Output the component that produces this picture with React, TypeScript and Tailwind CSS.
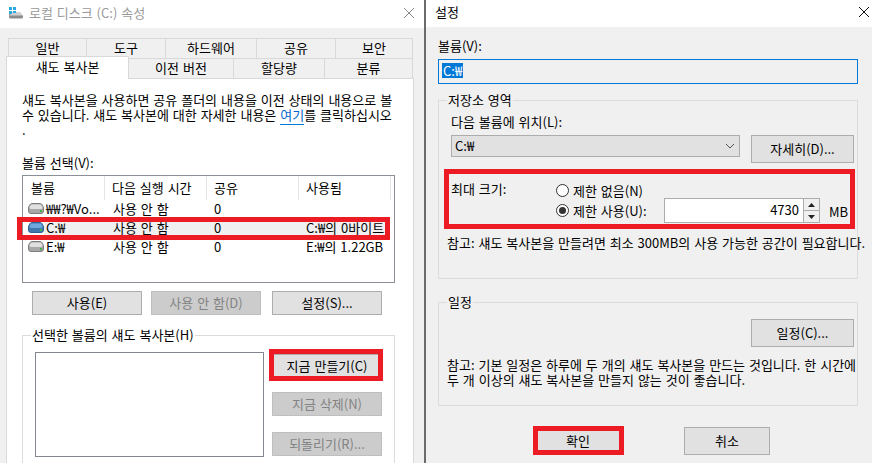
const font = { fontFamily: '"Noto Sans CJK KR", "Noto Sans", sans-serif' }

function DriveIcon({ blue }: { blue?: boolean }) {
  const top = blue ? '#6fa8dc' : '#e0e0e0'
  const side = blue ? '#3f78ad' : '#a8a8a8'
  const line = blue ? '#2f6596' : '#7d7d7d'
  return (
    <svg width="16" height="11" viewBox="0 0 16 11" className="shrink-0">
      <path d="M3.500.5h9c1 0 3 3 3 4.500v3a2.500 2.500 0 0 1-2.500 2.500H3A2.500 2.500 0 0 1 .5 8V5C.5 3.500 2.500.5 3.500.5z" fill={side} stroke={line} strokeWidth="1" />
      <path d="M4 1.500h8c1 0 2.500 2 2.500 3s-1 1.500-2 1.500h-9c-1 0-2-.5-2-1.500s1.500-3 2.500-3z" fill={top} />
      <rect x="12" y="7" width="2" height="2" fill="#3fb54a" />
    </svg>
  )
}

function TitleIcon() {
  return (
    <svg width="16" height="13" viewBox="0 0 16 13" className="shrink-0">
      <path d="M1 8h11l3 1.500V11a1.500 1.500 0 0 1-1.500 1.500h-11A1.500 1.500 0 0 1 1 11z" fill="#8c8c8c" />
      <path d="M5 6h7l3 3.500H1z" fill="#d0d0d0" />
      <rect x="1" y="1" width="3" height="3" fill="#2aa9e0" />
      <rect x="5" y="1" width="3" height="3" fill="#2aa9e0" />
      <rect x="1" y="5" width="3" height="3" fill="#2aa9e0" />
      <rect x="5" y="5" width="3" height="2" fill="#2aa9e0" />
    </svg>
  )
}

function CloseIcon({ color }: { color: string }) {
  return (
    <svg width="10" height="10" viewBox="0 0 10 10">
      <path d="M0 0l10 10M10 0L0 10" stroke={color} strokeWidth="1" fill="none" />
    </svg>
  )
}

function Btn({ label, disabled, w = 'w-[110px]', h = 'h-[24px]' }: { label: string; disabled?: boolean; w?: string; h?: string }) {
  return (
    <div
      className={`${w} ${h} shrink-0 flex items-center justify-center whitespace-nowrap pb-px border ${
        disabled ? 'bg-[#cccccc] border-[#bfbfbf] text-[#838383]' : 'bg-[#e1e1e1] border-[#adadad] text-black'
      }`}
    >
      {label}
    </div>
  )
}

function Highlight({ className }: { className: string }) {
  return <div className={`absolute border-[5px] border-[#ed1c24] pointer-events-none ${className}`}></div>
}

function Legend({ label }: { label: string }) {
  return <span className="absolute left-[8px] top-[-9px] bg-inherit px-[1px] leading-[15px] whitespace-nowrap">{label}</span>
}

function Radio({ checked }: { checked?: boolean }) {
  return (
    <span className="w-[13px] h-[13px] shrink-0 rounded-full border border-[#333333] bg-white flex items-center justify-center">
      {checked && <span className="w-[7px] h-[7px] rounded-full bg-[#333333]"></span>}
    </span>
  )
}

const tabsTop = [
  { label: '일반', w: 'w-[79px]' },
  { label: '도구', w: 'w-[80px]' },
  { label: '하드웨어', w: 'w-[92px]' },
  { label: '공유', w: 'w-[80px]' },
  { label: '보안', w: 'w-[78px]' },
]

const tabsBottom = [
  { label: '이전 버전', w: 'w-[106px]' },
  { label: '할당량', w: 'w-[92px]' },
  { label: '분류', w: 'w-[89px]' },
]

const volumes = [
  { name: '₩₩?₩Vo...', next: '사용 안 함', shares: '0', used: '' },
  { name: 'C:₩', next: '사용 안 함', shares: '0', used: 'C:₩의 0바이트', selected: true },
  { name: 'E:₩', next: '사용 안 함', shares: '0', used: 'E:₩의 1.22GB' },
]

function PropertiesWindow() {
  return (
    <div className="w-[426px] shrink-0 h-full flex flex-col bg-[#f0f0f0] border-r-2 border-[#6b6b6b]">
      <div className="h-[28px] shrink-0 bg-white flex items-center pl-[8px] pr-[10px] pb-[3px]">
        <TitleIcon />
        <span className="ml-[5px] text-[#9a9a9a]">로컬 디스크 (C:) 속성</span>
        <span className="ml-auto flex"><CloseIcon color="#8a8a8a" /></span>
      </div>

      <div className="pt-[10px] pl-[6px]">
        <div className="flex ml-[2px] h-[20px]">
          {tabsTop.map((t) => (
            <div key={t.label} className={`${t.w} flex items-center justify-center pb-px border border-b-0 border-[#d9d9d9] -mr-px`}>
              {t.label}
            </div>
          ))}
        </div>
        <div className="flex items-end h-[20px]">
          <div className="w-[123px] h-[23px] relative z-10 -mb-px bg-white border border-b-0 border-[#d9d9d9] flex items-center justify-center pb-[3px]">
            섀도 복사본
          </div>
          {tabsBottom.map((t) => (
            <div key={t.label} className={`${t.w} h-[20px] flex items-center justify-center pb-px border border-b-0 border-[#d9d9d9] -ml-px`}>
              {t.label}
            </div>
          ))}
        </div>

        <div className="w-[408px] h-[400px] bg-white border border-[#d9d9d9] pl-[15px] pt-[13px] overflow-hidden">
          <p className="leading-[15px] whitespace-nowrap">
            섀도 복사본을 사용하면 공유 폴더의 내용을 이전 상태의 내용으로 볼<br />
            수 있습니다. 섀도 복사본에 대한 자세한 내용은{' '}
            <span className="text-[#0066cc] border-b border-[#0078d7]">여기</span>를 클릭하십시오<br />
            .
          </p>
          <div className="mt-[18px] leading-[15px]">볼륨 선택(V):</div>

          <div className="mt-[5px] w-[373px] h-[108px] border border-[#8a8f99]">
            <div className="flex h-[24px] items-center">
              <div className="w-[82px] h-full pl-[8px] pb-px flex items-center border-r border-[#e5e5e5]">볼륨</div>
              <div className="w-[102px] h-full pl-[7px] pb-px flex items-center border-r border-[#e5e5e5]">다음 실행 시간</div>
              <div className="w-[92px] h-full pl-[7px] pb-px flex items-center border-r border-[#e5e5e5]">공유</div>
              <div className="w-[92px] h-full pl-[7px] pb-px flex items-center border-r border-[#e5e5e5]">사용됨</div>
            </div>
            {volumes.map((v) => (
              <div key={v.name} className="flex h-[19px] items-center">
                <div className="w-[21px] pl-[5px] pb-[2px] flex shrink-0"><DriveIcon blue={v.selected} /></div>
                <div className={`w-[341px] h-full pb-px flex items-center ${v.selected ? 'bg-[#f0f0f0]' : ''}`}>
                  <div className="w-[61px] pl-[2px] whitespace-nowrap">{v.name}</div>
                  <div className="w-[102px] pl-[8px]">{v.next}</div>
                  <div className="w-[92px] pl-[7px]">{v.shares}</div>
                  <div className="w-[86px] pl-[7px] whitespace-nowrap">{v.used}</div>
                </div>
              </div>
            ))}
          </div>

          <div className="flex mt-[8px] ml-[10px] gap-[9px]">
            <Btn label="사용(E)" />
            <Btn label="사용 안 함(D)" disabled />
            <div className="ml-[2px]"><Btn label="설정(S)..." /></div>
          </div>

          <div className="relative mt-[20px] w-[373px] h-[200px] border border-[#dcdcdc] bg-white pl-[12px] pt-[16px] flex items-start">
            <Legend label="선택한 볼륨의 섀도 복사본(H)" />
            <div className="w-[229px] h-[105px] border border-[#828790] bg-white shrink-0"></div>
            <div className="ml-[8px] flex flex-col">
              <div className="mt-[2px]"><Btn label="지금 만들기(C)" /></div>
              <div className="mt-[14px]"><Btn label="지금 삭제(N)" disabled /></div>
              <div className="mt-[16px]"><Btn label="되돌리기(R)..." disabled /></div>
            </div>
          </div>
        </div>
      </div>
    </div>
  )
}

function SettingsWindow() {
  return (
    <div className="flex-1 h-full bg-[#f0f0f0] flex flex-col">
      <div className="h-[27px] shrink-0 bg-white flex items-center pl-[9px] pr-[3px] pb-[3px]">
        <span>설정</span>
        <span className="ml-auto flex"><CloseIcon color="#111111" /></span>
      </div>

      <div className="pl-[12px] pt-[11px]">
        <div className="leading-[15px]">볼륨(V):</div>
        <div className="mt-[6px] w-[420px] h-[25px] border border-[#0078d7] pl-[3px] pb-[2px] flex items-center">
          <span className="bg-[#0078d7] text-white leading-[15px] px-px">C:₩</span>
        </div>

        <div className="relative mt-[16px] w-[420px] h-[179px] border border-[#dcdcdc] bg-[#f0f0f0] pl-[8px] pt-[13px]">
          <Legend label="저장소 영역" />
          <div className="pl-[4px] leading-[15px]">다음 볼륨에 위치(L):</div>
          <div className="pl-[4px] mt-[6px] flex items-start">
            <div className="w-[289px] h-[22px] bg-[#e1e1e1] border border-[#adadad] pl-[3px] pr-[4px] pb-px flex items-center justify-between">
              <span>C:₩</span>
              <svg width="10" height="6" viewBox="0 0 10 6"><path d="M1 1l4 4 4-4" stroke="#555555" fill="none" /></svg>
            </div>
            <div className="ml-[11px]"><Btn label="자세히(D)..." w="w-[103px]" h="h-[28px]" /></div>
          </div>

          <div className="pl-[4px] mt-[19px] flex items-start">
            <div className="w-[105px] leading-[15px] -mt-[1px]">최대 크기:</div>
            <div className="flex flex-col">
              <div className="h-[15px] flex items-center gap-[4px] mt-[1px]">
                <Radio />
                <span>제한 없음(N)</span>
              </div>
              <div className="flex items-start">
                <div className="w-[108px] h-[25px] flex items-center gap-[4px]">
                  <Radio checked />
                  <span>제한 사용(U):</span>
                </div>
                <div className="w-[140px] h-[25px] bg-white border border-[#adadad] flex items-center justify-end pr-[4px] pb-[2px]">4730</div>
                <div className="w-[16px] h-[25px] border border-l-0 border-[#adadad] flex flex-col">
                  <div className="h-[12px] bg-[#f0f0f0] border-b border-[#adadad] flex items-center justify-center">
                    <svg width="7" height="4" viewBox="0 0 7 4"><path d="M3.500 0L7 4H0z" fill="#222222" /></svg>
                  </div>
                  <div className="flex-1 bg-[#f0f0f0] flex items-center justify-center">
                    <svg width="7" height="4" viewBox="0 0 7 4"><path d="M0 0h7L3.500 4z" fill="#222222" /></svg>
                  </div>
                </div>
                <span className="ml-[9px] mt-[4px]">MB</span>
              </div>
            </div>
          </div>

          <div className="mt-[12px] leading-[15px] whitespace-nowrap">참고: 섀도 복사본을 만들려면 최소 300MB의 사용 가능한 공간이 필요합니다.</div>
        </div>

        <div className="relative mt-[23px] w-[420px] h-[104px] border border-[#dcdcdc] bg-[#f0f0f0] pl-[8px] pt-[16px]">
          <Legend label="일정" />
          <div className="ml-[304px]"><Btn label="일정(C)..." w="w-[103px]" h="h-[28px]" /></div>
          <p className="mt-[10px] leading-[15px] whitespace-nowrap">
            참고: 기본 일정은 하루에 두 개의 섀도 복사본을 만드는 것입니다. 한 시간에<br />
            두 개 이상의 섀도 복사본을 만들지 않는 것이 좋습니다.
          </p>
        </div>

        <div className="mt-[21px] ml-[97px] flex gap-[63px]">
          <Btn label="확인" w="w-[86px]" h="h-[28px]" />
          <Btn label="취소" w="w-[86px]" h="h-[28px]" />
        </div>
      </div>
    </div>
  )
}

export default function App() {
  return (
    <div className="relative w-[872px] h-[463px] overflow-hidden flex bg-[#f0f0f0] text-[13px] [word-spacing:1px] text-black" style={font}>
      <PropertiesWindow />
      <SettingsWindow />

      {/* red annotation boxes drawn over the dialogs */}
      <Highlight className="left-[17px] top-[217px] w-[373px] h-[23px]" />
      <Highlight className="left-[269px] top-[349px] w-[114px] h-[32px]" />
      <Highlight className="left-[444px] top-[169px] w-[411px] h-[60px]" />
      <Highlight className="left-[533px] top-[426px] w-[91px] h-[29px]" />
    </div>
  )
}
